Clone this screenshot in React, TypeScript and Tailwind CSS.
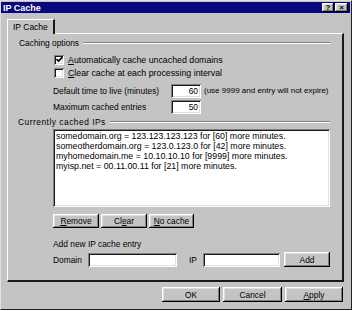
import React from 'react';

const raised =
  'bg-[#c4c4c4] shadow-[inset_-1px_-1px_#000,inset_1px_1px_#fff,inset_-2px_-2px_#808080,inset_2px_2px_#dfdfdf]';
const sunken =
  'bg-white shadow-[inset_1px_1px_#808080,inset_-1px_-1px_#fff,inset_2px_2px_#1a1a1a,inset_-2px_-2px_#dfdfdf]';

function Btn({ w, h = 'h-[14px]', children }: { w: string; h?: string; children: React.ReactNode }) {
  return <div className={`${raised} ${w} ${h} flex items-center justify-center text-black`}>{children}</div>;
}

function GroupHead({ label, pl, text = '' }: { label: string; pl: string; text?: string }) {
  return (
    <div className={`flex items-center h-[10px] ${pl} pr-[12px]`}>
      <span className={`mr-[4px] ${text}`}>{label}</span>
      <div className="flex-1 h-[2px] border-t border-[#808080] border-b border-b-white" />
    </div>
  );
}

function Check({ checked, children }: { checked?: boolean; children: React.ReactNode }) {
  return (
    <div className="flex items-center h-[11px] pl-[46px]">
      <div className={`${sunken} w-[10px] h-[10px] flex items-center justify-center`}>
        {checked && (
          <svg width="7" height="7" viewBox="0 0 7 7">
            <path d="M0.5 3 L2.5 5 L6.5 1" stroke="#000" strokeWidth="1.6" fill="none" />
          </svg>
        )}
      </div>
      <span className="ml-[4px] text-[8.8px]">{children}</span>
    </div>
  );
}

export default function App() {
  const cached = [
    'somedomain.org = 123.123.123.123 for [60] more minutes.',
    'someotherdomain.org = 123.0.123.0 for [42] more minutes.',
    'myhomedomain.me = 10.10.10.10 for [9999] more minutes.',
    'myisp.net = 00.11.00.11 for [21] more minutes.',
  ];

  return (
    <div className="w-[352px] h-[310px] bg-[#c4c4c4] border-l border-t border-l-[#e0e0e0] border-t-[#e0e0e0] border-r border-b border-r-[#222] border-b-[#222] font-['Liberation_Sans',Arial,sans-serif] text-[8.4px] leading-[10px] text-black overflow-hidden">
      {/* Title bar */}
      <div className="mt-[1px] mr-[1px] h-[11px] bg-[#08087e] flex items-center justify-between pl-[2px] pr-[2px]">
        <span className="text-white font-bold text-[9px]">IP Cache</span>
        <div className="flex gap-[1px]">
          <div className={`${raised} w-[12px] h-[9px] flex items-center justify-center text-[8px] font-bold leading-none`}>?</div>
          <div className={`${raised} w-[13px] h-[9px] flex items-center justify-center text-[8px] font-bold leading-none`}>×</div>
        </div>
      </div>

      {/* Tab */}
      <div className="pl-[6px] mt-[6px] flex">
        <div className="relative z-10 -mb-[1px] w-[48px] h-[15px] bg-[#c4c4c4] border-t border-l border-white border-r-2 border-r-[#1a1a1a] pl-[5px] pt-[2px] text-[8.5px]">
          IP Cache
        </div>
      </div>

      {/* Tab panel */}
      <div className="ml-[6px] w-[337px] h-[249px] border-t border-l border-white border-r-2 border-b-2 border-r-[#1a1a1a] border-b-[#1a1a1a] flex flex-col">
        <div className="mt-[4px]">
          <GroupHead label="Caching options" pl="pl-[11px]" />
        </div>
        <div className="mt-[6px]">
          <Check checked>
            <span className="underline">A</span>utomatically cache uncached domains
          </Check>
        </div>
        <div className="mt-[2px]">
          <Check>
            <span className="underline">C</span>lear cache at each processing interval
          </Check>
        </div>
        <div className="mt-[6px] flex items-center h-[14px] pl-[45px]">
          <span className="w-[118px]">Default time to live (minutes)</span>
          <div className={`${sunken} w-[30px] h-[14px] flex items-center justify-end pr-[3px]`}>60</div>
          <span className="ml-[3px] text-[8px]">(use 9999 and entry will not expire)</span>
        </div>
        <div className="mt-[2px] flex items-center h-[14px] pl-[45px]">
          <span className="w-[118px]">Maximum cached entries</span>
          <div className={`${sunken} w-[30px] h-[14px] flex items-center justify-end pr-[3px]`}>50</div>
        </div>

        <div className="mt-[3px]">
          <GroupHead label="Currently cached IPs" pl="pl-[10px]" text="tracking-[0.5px]" />
        </div>
        <div className={`${sunken} mt-[2px] ml-[45px] w-[277px] h-[78px] pl-[3px] pt-[2px] text-[8.8px] leading-[10px]`}>
          {cached.map((c) => (
            <div key={c}>{c}</div>
          ))}
        </div>
        <div className="mt-[7px] ml-[45px] flex gap-[2px]">
          <Btn w="w-[46px]">
            <span className="underline">R</span>emove
          </Btn>
          <Btn w="w-[46px]">
            Cl<span className="underline">e</span>ar
          </Btn>
          <Btn w="w-[45px]">
            <span className="underline">N</span>o cache
          </Btn>
        </div>
        <div className="mt-[11px] ml-[45px] h-[10px]">Add new IP cache entry</div>
        <div className="mt-[3px] ml-[45px] flex items-center h-[15px]">
          <span className="w-[35px]">Domain</span>
          <div className={`${sunken} w-[89px] h-[14px]`} />
          <span className="ml-[12px] w-[14px]">IP</span>
          <div className={`${sunken} w-[77px] h-[14px]`} />
          <div className="ml-[4px]">
            <Btn w="w-[46px]" h="h-[15px]">Add</Btn>
          </div>
        </div>
      </div>

      {/* Dialog buttons */}
      <div className="mt-[5px] pr-[8px] flex justify-end gap-[3px]">
        <Btn w="w-[58px]" h="h-[15px]">OK</Btn>
        <Btn w="w-[59px]" h="h-[15px]">Cancel</Btn>
        <Btn w="w-[58px]" h="h-[15px]">
          <span className="underline">A</span>pply
        </Btn>
      </div>
    </div>
  );
}
